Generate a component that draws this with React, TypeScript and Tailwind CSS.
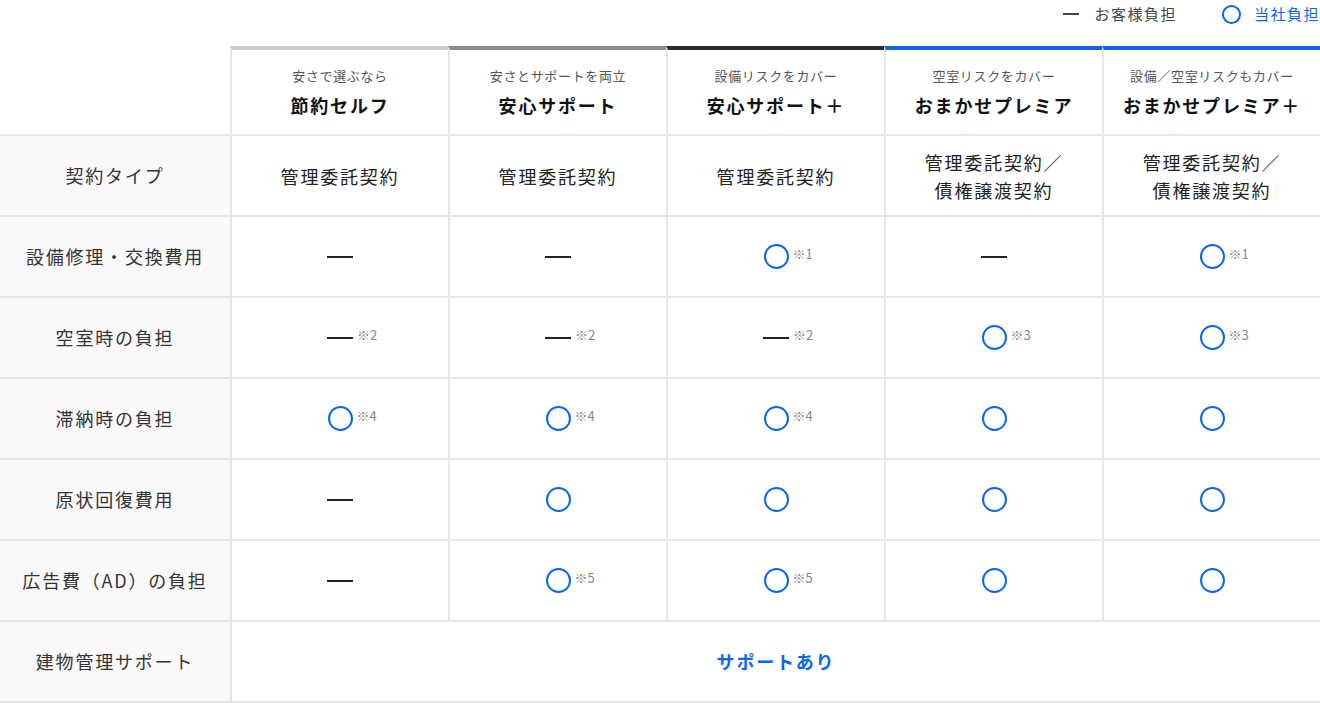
import React from "react";

type Mark = "dash" | "circle" | string[];

interface Cell {
  mark: Mark;
  note?: string;
}

interface Plan {
  sub: string;
  title: string;
  bar: string;
}

const plans: Array<Plan> = [
  { sub: "安さで選ぶなら", title: "節約セルフ", bar: "border-t-[#cccccc]" },
  { sub: "安さとサポートを両立", title: "安心サポート", bar: "border-t-[#8c8c8c]" },
  { sub: "設備リスクをカバー", title: "安心サポート＋", bar: "border-t-[#2b2b2b]" },
  { sub: "空室リスクをカバー", title: "おまかせプレミア", bar: "border-t-[#0a66f0]" },
  { sub: "設備／空室リスクもカバー", title: "おまかせプレミア＋", bar: "border-t-[#0a66f0]" },
];

const one = ["管理委託契約"];
const two = ["管理委託契約／", "債権譲渡契約"];

const rows: Array<{ label: string; cells: Cell[] }> = [
  {
    label: "契約タイプ",
    cells: [{ mark: one }, { mark: one }, { mark: one }, { mark: two }, { mark: two }],
  },
  {
    label: "設備修理・交換費用",
    cells: [
      { mark: "dash" },
      { mark: "dash" },
      { mark: "circle", note: "※1" },
      { mark: "dash" },
      { mark: "circle", note: "※1" },
    ],
  },
  {
    label: "空室時の負担",
    cells: [
      { mark: "dash", note: "※2" },
      { mark: "dash", note: "※2" },
      { mark: "dash", note: "※2" },
      { mark: "circle", note: "※3" },
      { mark: "circle", note: "※3" },
    ],
  },
  {
    label: "滞納時の負担",
    cells: [
      { mark: "circle", note: "※4" },
      { mark: "circle", note: "※4" },
      { mark: "circle", note: "※4" },
      { mark: "circle" },
      { mark: "circle" },
    ],
  },
  {
    label: "原状回復費用",
    cells: [
      { mark: "dash" },
      { mark: "circle" },
      { mark: "circle" },
      { mark: "circle" },
      { mark: "circle" },
    ],
  },
  {
    label: "広告費（AD）の負担",
    cells: [
      { mark: "dash" },
      { mark: "circle", note: "※5" },
      { mark: "circle", note: "※5" },
      { mark: "circle" },
      { mark: "circle" },
    ],
  },
];

const font = "font-['Noto_Sans_CJK_JP','Noto_Sans',sans-serif]";

const MarkView = ({ cell }: { cell: Cell }) => {
  if (Array.isArray(cell.mark)) {
    return (
      <div className="text-center text-[18px] leading-[28px] tracking-[0.1em] text-[#222]">
        {cell.mark.map((line) => (
          <div key={line}>{line}</div>
        ))}
      </div>
    );
  }
  return (
    <div className="relative flex items-center justify-center">
      {cell.mark === "dash" ? (
        <div className="w-[26px] h-[2px] bg-[#222]" />
      ) : (
        <div className="w-[25px] h-[25px] rounded-full border-2 border-[#0a66f0]" />
      )}
      {cell.note && (
        <span
          className={`absolute left-full ml-[4px] text-[13px] leading-none text-[#888] whitespace-nowrap ${
            cell.mark === "dash" ? "-top-[9px]" : "top-[3px]"
          }`}
        >
          {cell.note}
        </span>
      )}
    </div>
  );
};

export default function App() {
  return (
    <div className={`w-[1320px] h-[703px] bg-white overflow-hidden ${font}`}>
      <div className="h-[46px] flex justify-end items-start pt-[2px]">
        <div className="flex items-center h-[24px] text-[15px] tracking-[0.1em]">
          <div className="w-[16px] h-[2px] bg-[#444] mr-[15px]" />
          <span className="text-[#444]">お客様負担</span>
          <div className="w-[19px] h-[19px] rounded-full border-2 border-[#0a66f0] ml-[45px] mr-[13px]" />
          <span className="text-[#0a66f0] whitespace-nowrap">当社負担</span>
        </div>
      </div>

      <div className="grid grid-cols-[230px_repeat(5,1fr)]">
        <div className="h-[90px] border-b-2 border-[#e6e6e6]" />
        {plans.map((p) => (
          <div
            key={p.title}
            className={`h-[90px] border-l-2 border-b-2 border-t-4 border-l-[#e6e6e6] border-b-[#e6e6e6] ${p.bar} flex flex-col items-center justify-center`}
          >
            <div className="text-[13px] leading-[18px] tracking-[0.05em] text-[#555]">
              {p.sub}
            </div>
            <div className="mt-[7px] text-[18px] leading-[26px] font-bold tracking-[0.1em] text-[#111]">
              {p.title}
            </div>
          </div>
        ))}

        {rows.map((r) => (
          <React.Fragment key={r.label}>
            <div className="h-[81px] bg-[#f9f9f9] border-b-2 border-[#e6e6e6] flex items-center justify-center text-[18px] tracking-[0.1em] text-[#333]">
              {r.label}
            </div>
            {r.cells.map((c, i) => (
              <div
                key={i}
                className="h-[81px] border-l-2 border-b-2 border-[#e6e6e6] flex items-center justify-center"
              >
                <MarkView cell={c} />
              </div>
            ))}
          </React.Fragment>
        ))}

        <div className="h-[81px] bg-[#f9f9f9] border-b-2 border-[#e6e6e6] flex items-center justify-center text-[18px] tracking-[0.1em] text-[#333]">
          建物管理サポート
        </div>
        <div className="col-span-5 h-[81px] border-l-2 border-b-2 border-[#e6e6e6] flex items-center justify-center text-[18px] font-bold tracking-[0.1em] text-[#0a66f0]">
          サポートあり
        </div>
      </div>
    </div>
  );
}
